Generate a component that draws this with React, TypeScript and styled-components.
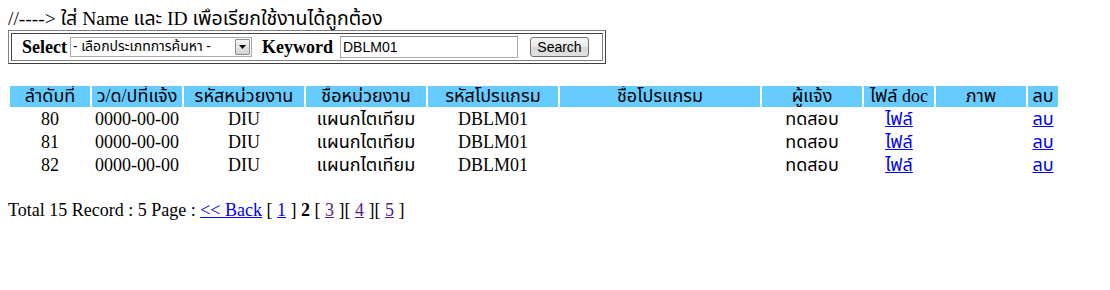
import React from "react";
import styled, { createGlobalStyle } from "styled-components";

const GlobalStyle = createGlobalStyle`
  body {
    margin: 8px;
    background: #ffffff;
    color: #000000;
    font-family: "Liberation Serif", Tahoma, "Noto Sans Thai", "Noto Sans", serif;
    font-size: 18px;
  }
`;

const columns = [
  { title: "ลำดับที่", width: 80 },
  { title: "ว/ด/ปที่แจ้ง", width: 90 },
  { title: "รหัสหน่วยงาน", width: 120 },
  { title: "ชื่อหน่วยงาน", width: 120 },
  { title: "รหัสโปรแกรม", width: 130 },
  { title: "ชื่อโปรแกรม", width: 200 },
  { title: "ผู้แจ้ง", width: 100 },
  { title: "ไฟล์ doc", width: 70 },
  { title: "ภาพ", width: 90 },
  { title: "ลบ", width: 30 },
];

const rows = [
  { no: 80, date: "0000-00-00", unit: "DIU", unitName: "แผนกไตเทียม", code: "DBLM01", user: "ทดสอบ" },
  { no: 81, date: "0000-00-00", unit: "DIU", unitName: "แผนกไตเทียม", code: "DBLM01", user: "ทดสอบ" },
  { no: 82, date: "0000-00-00", unit: "DIU", unitName: "แผนกไตเทียม", code: "DBLM01", user: "ทดสอบ" },
];

const App: React.FC = () => {
  return (
    <>
      <GlobalStyle />
      <Intro>//----&gt; ใส่ Name และ ID เพื่อเรียกใช้งานได้ถูกต้อง</Intro>

      <SearchFrame>
        <SearchCell>
          <Label>Select</Label>
          <FakeSelect>
            <SelectText>- เลือกประเภทการค้นหา -</SelectText>
            <ArrowButton>
              <svg width="7" height="4" viewBox="0 0 7 4">
                <path d="M0 0 H7 L3.5 4 Z" fill="#000" />
              </svg>
            </ArrowButton>
          </FakeSelect>
          <Label $left={10}>Keyword</Label>
          <KeywordInput defaultValue="DBLM01" />
          <SearchButton type="button">Search</SearchButton>
        </SearchCell>
      </SearchFrame>

      {/* result table */}
      <ResultTable>
        <thead>
          <tr>
            {columns.map((c) => (
              <HeadCell key={c.title} style={{ width: c.width }}>
                {c.title}
              </HeadCell>
            ))}
          </tr>
        </thead>
        <tbody>
          {rows.map((r) => (
            <tr key={r.no}>
              <Cell>{r.no}</Cell>
              <Cell>{r.date}</Cell>
              <Cell>{r.unit}</Cell>
              <Cell>{r.unitName}</Cell>
              <Cell>{r.code}</Cell>
              <Cell></Cell>
              <Cell>{r.user}</Cell>
              <Cell>
                <Link href="#">ไฟล์</Link>
              </Cell>
              <Cell></Cell>
              <Cell>
                <Link href="#">ลบ</Link>
              </Cell>
            </tr>
          ))}
        </tbody>
      </ResultTable>

      <Pager>
        Total 15 Record : 5 Page : <Link href="#">&lt;&lt; Back</Link> [ <Link href="#">1</Link> ]{" "}
        <b>2</b> [ <Link href="#" $visited>3</Link> ][ <Link href="#" $visited>4</Link> ][{" "}
        <Link href="#" $visited>5</Link> ]
      </Pager>
    </>
  );
};

const Intro = styled.div`
  height: 22px;
  line-height: 22px;
  font-size: 19.5px;
  white-space: nowrap;
`;

const SearchFrame = styled.div`
  width: 598px;
  box-sizing: border-box;
  border: 1px solid #808080;
  border-right-color: #404040;
  border-bottom-color: #404040;
  padding: 2px;
`;

const SearchCell = styled.div`
  display: flex;
  align-items: center;
  height: 28px;
  box-sizing: border-box;
  border: 1px solid #404040;
  border-right-color: #808080;
  border-bottom-color: #808080;
  padding-left: 10px;
  line-height: 20px;
`;

const Label = styled.span<{ $left?: number }>`
  font-weight: bold;
  margin-left: ${(p) => p.$left ?? 0}px;
  margin-right: 3px;
`;

const FakeSelect = styled.div`
  display: flex;
  align-items: stretch;
  width: 182px;
  height: 20px;
  box-sizing: border-box;
  border: 1px solid #a5acb2;
  background: #fff;
`;

const SelectText = styled.span`
  flex: 1;
  font-family: Tahoma, "Noto Sans Thai", "Liberation Sans", sans-serif;
  font-size: 14px;
  line-height: 18px;
  padding-left: 2px;
  white-space: nowrap;
`;

const ArrowButton = styled.span`
  display: flex;
  align-items: center;
  justify-content: center;
  width: 15px;
  margin: 1px;
  box-sizing: border-box;
  border: 1px solid #8f8f8f;
  border-radius: 1px;
  background: linear-gradient(#f4f4f4, #d4d4d4);
`;

const KeywordInput = styled.input`
  width: 178px;
  height: 22px;
  box-sizing: border-box;
  margin-left: 4px;
  border: 1px solid #a9a9a9;
  border-top-color: #8a8a8a;
  padding: 1px 2px;
  font-family: "Liberation Sans", Arial, sans-serif;
  font-size: 14px;
  color: #000;
`;

const SearchButton = styled.button`
  width: 59px;
  height: 20px;
  margin-left: 12px;
  box-sizing: border-box;
  border: 1px solid #707070;
  border-radius: 3px;
  background: linear-gradient(#f6f6f6 0%, #e9e9e9 50%, #d8d8d8 51%, #e0e0e0 100%);
  font-family: "Liberation Sans", Arial, sans-serif;
  font-size: 14px;
  line-height: 16px;
  padding: 0;
  color: #000;
`;

const ResultTable = styled.table`
  margin-top: 20px;
  border-collapse: separate;
  border-spacing: 2px;
  margin-left: 0;
`;

const HeadCell = styled.td`
  background: #66ccff;
  height: 21px;
  line-height: 21px;
  padding: 0;
  text-align: center;
  white-space: nowrap;
  overflow: hidden;
  font-weight: normal;
`;

const Cell = styled.td`
  height: 21px;
  line-height: 21px;
  padding: 0;
  text-align: center;
  white-space: nowrap;
`;

const Link = styled.a<{ $visited?: boolean }>`
  color: ${(p) => (p.$visited ? "#551a8b" : "#0000ee")};
  text-decoration: underline;
`;

const Pager = styled.div`
  margin-top: 22px;
  line-height: 20px;
`;

export default App;
